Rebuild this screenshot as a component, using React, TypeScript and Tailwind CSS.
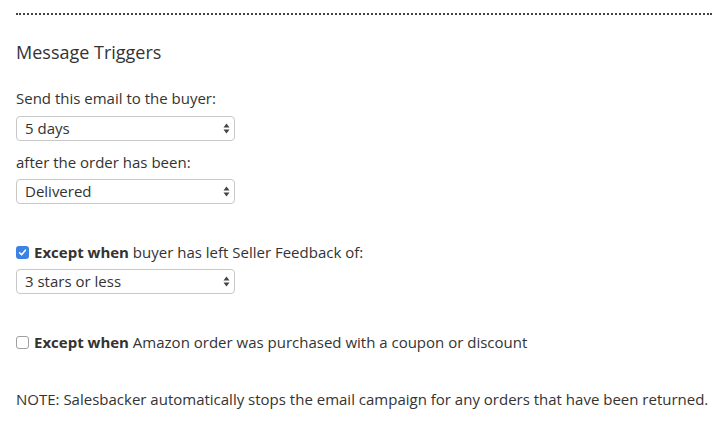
import React from "react";

function Arrows() {
  return (
    <svg width="7" height="11" viewBox="0 0 7 11" className="shrink-0">
      <path d="M3.5 0.5 L6.5 4.5 L0.5 4.5 Z" fill="#444" />
      <path d="M3.5 10.5 L6.5 6.5 L0.5 6.5 Z" fill="#444" />
    </svg>
  );
}

function Select({ value }: { value: string }) {
  return (
    <div className="w-[219px] h-[25px] border border-[#c8c8c8] rounded-[4px] bg-white flex items-center justify-between pl-[8px] pr-[4px] text-[15px] text-[#333]">
      <span>{value}</span>
      <Arrows />
    </div>
  );
}

function Checkbox({ checked }: { checked: boolean }) {
  if (checked) {
    return (
      <span className="w-[13px] h-[13px] rounded-[3px] bg-[#3b82e6] flex items-center justify-center shrink-0">
        <svg width="9" height="9" viewBox="0 0 9 9">
          <path d="M1.6 4.8 L3.6 6.8 L7.4 2.2" stroke="white" strokeWidth="1.6" fill="none" strokeLinecap="round" strokeLinejoin="round" />
        </svg>
      </span>
    );
  }
  return <span className="w-[13px] h-[13px] rounded-[3px] border border-[#a0a0a0] bg-white shrink-0" />;
}

export default function App() {
  return (
    <div
      className="w-[724px] h-[431px] bg-white text-[#333] overflow-hidden"
      style={{ fontFamily: '"Open Sans", "Noto Sans", sans-serif' }}
    >
      <div className="px-4 pt-[13px]">
        <div className="w-[696px] border-t-2 border-dotted border-[#444]" />
        <h2 className="mt-[24px] text-[18px] leading-[26px] text-[#333]">Message Triggers</h2>
        <div className="mt-[23px] text-[15px] leading-[20px]">Send this email to the buyer:</div>
        <div className="mt-[8px]">
          <Select value="5 days" />
        </div>
        <div className="mt-[11px] text-[15px] leading-[20px]">after the order has been:</div>
        <div className="mt-[7px]">
          <Select value="Delivered" />
        </div>
        <div className="mt-[38px] flex items-center gap-[5px] text-[15px] leading-[20px]">
          <Checkbox checked />
          <span>
            <b className="font-bold">Except when</b> buyer has left Seller Feedback of:
          </span>
        </div>
        <div className="mt-[7px]">
          <Select value="3 stars or less" />
        </div>
        <div className="mt-[38px] flex items-center gap-[5px] text-[15px] leading-[20px]">
          <Checkbox checked={false} />
          <span>
            <b className="font-bold">Except when</b> Amazon order was purchased with a coupon or discount
          </span>
        </div>
        <div className="mt-[37px] text-[15px] leading-[20px] whitespace-nowrap">
          NOTE: Salesbacker automatically stops the email campaign for any orders that have been returned.
        </div>
      </div>
    </div>
  );
}
